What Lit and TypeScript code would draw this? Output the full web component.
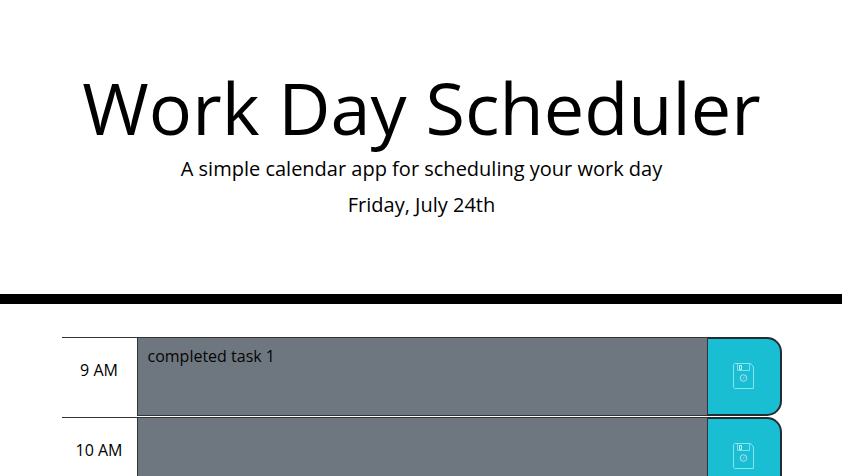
import { LitElement, html, css } from "lit";
import { customElement, property } from "lit/decorators.js";

@customElement("time-block")
class TimeBlock extends LitElement {
  @property() hour = "";
  @property() task = "";

  static styles = css`
    :host { display: grid; grid-template-columns: 75px 571px 74px; height: 79px; margin-bottom: 1px; }
    .hour { border-top: 1px solid #333438; height: 79px; box-sizing: border-box; padding: 20px 1px 0 0;
      text-align: center; line-height: 24px; }
    .task { box-sizing: border-box; height: 79px; border: 1px solid #333438; background: #6e777f;
      padding: 6px 9.500px; line-height: 24px; color: #050506; }
    .save { box-sizing: border-box; width: 74px; height: 79px; border: 2px solid #252b33; border-left: 0; padding: 0;
      border-radius: 0 15px 15px 0; background: #1abed3; display: flex; align-items: center; justify-content: center; }
    .disk { display: block; width: 22px; height: 27px; margin-right: 1px; }
  `;

  render() {
    return html`
      <div class="hour">${this.hour}</div>
      <div class="task">${this.task}</div>
      <button class="save" aria-label="Save">
        <svg class="disk" viewBox="0 0 22 27" fill="none" stroke="#98eef3">
          <path d="M1.500 .5H17.500L20.500 4V25.500H1.500L.5 24.500V1.500Z" stroke-opacity=".85" />
          <path d="M4.500 .5V7.500H16.500V.5" stroke-opacity=".75" />
          <path d="M6.500 2.500H8.500V6.500H6.500Z" stroke="#c9f1f6" />
          <circle cx="10.500" cy="15" r="3.300" stroke="#b5dcea" />
          <path d="M9.300 16.200L11.800 13.700" stroke="#b5dcea" stroke-width=".8" />
        </svg>
      </button>
    `;
  }
}

@customElement("app-root")
class AppRoot extends LitElement {
  static styles = css`
    :host { display: block; height: 476px; overflow: hidden; background: #fff; color: #000;
      font-family: "Open Sans", sans-serif; font-size: 16px; }
    .header { box-sizing: border-box; height: 304px; padding: 64px 0 0 1px; border-bottom: 10px solid #000; text-align: center; }
    .title { margin: 0; font-size: 72px; font-weight: 400; line-height: 86px; letter-spacing: .04px; white-space: nowrap; }
    .lead { margin: 4px 0 0; font-size: 20px; line-height: 30px; }
    .day { margin: 6px 0 0; font-size: 20px; line-height: 30px; }
    .blocks { width: 720px; margin: 33px auto 0; padding-left: 2px; }
  `;

  private blocks = [
    { hour: "9 AM", task: "completed task 1" },
    { hour: "10 AM", task: "" },
  ];

  render() {
    return html`
      <header class="header">
        <h1 class="title">Work Day Scheduler</h1>
        <p class="lead">A simple calendar app for scheduling your work day</p>
        <p class="day">Friday, July 24th</p>
      </header>
      <main class="blocks">
        ${this.blocks.map((b) => html`<time-block .hour=${b.hour} .task=${b.task}></time-block>`)}
      </main>
    `;
  }
}
